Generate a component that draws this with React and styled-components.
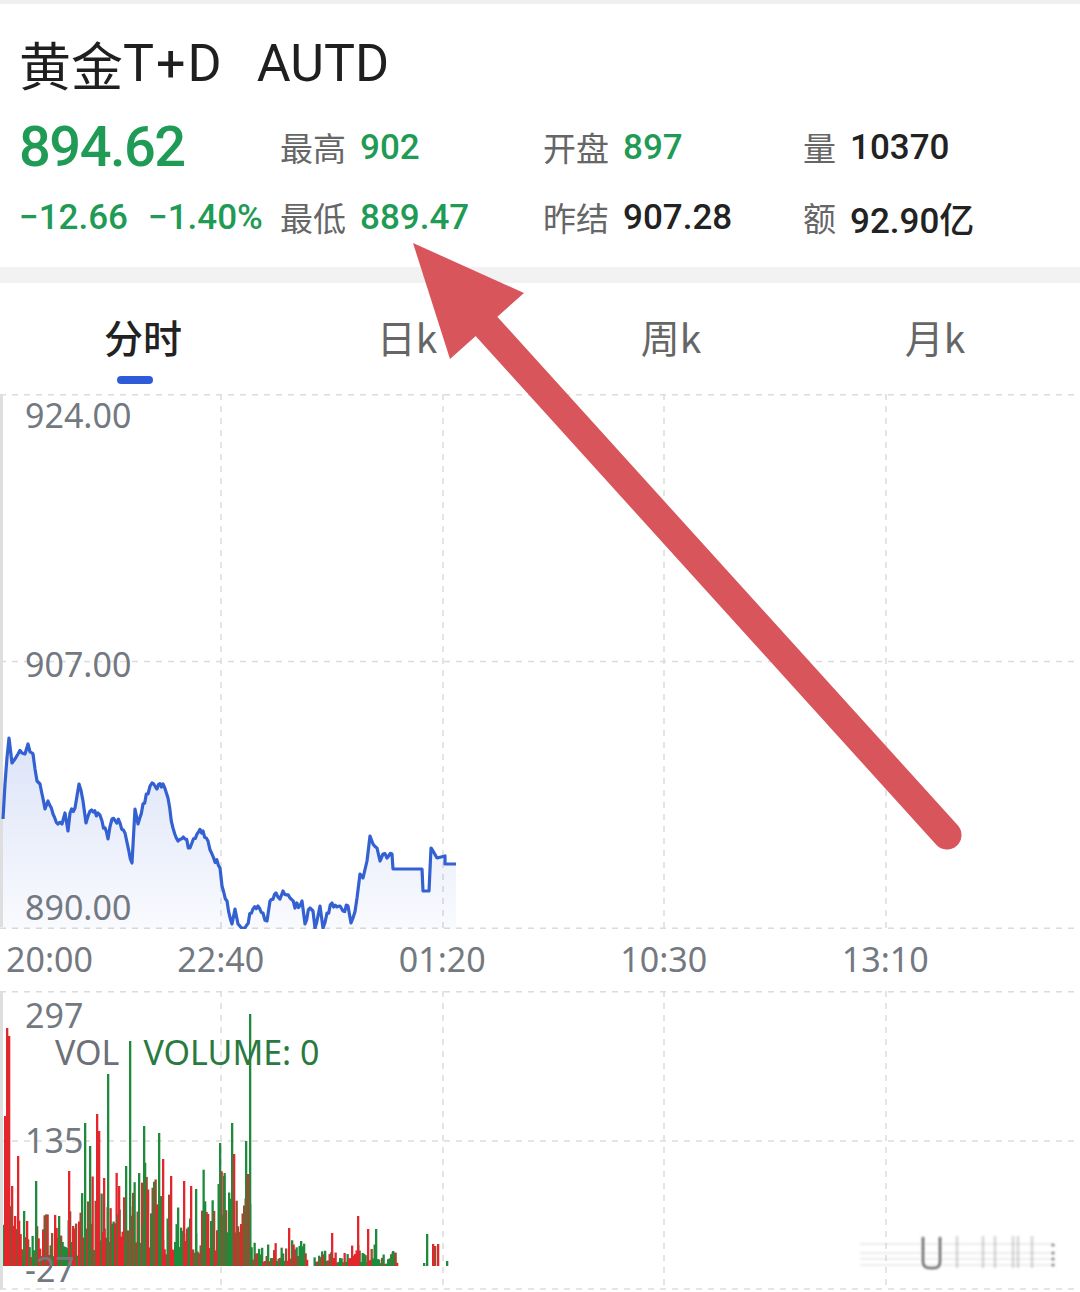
import React from 'react'
import styled, { createGlobalStyle } from 'styled-components'

const GREEN = '#1f9b55'
const AXIS = '#737981'
const GRID = '#dcdcdc'

const GlobalStyle = createGlobalStyle`
  html, body {
    margin: 0;
    padding: 0;
    background: #fff;
  }
  body {
    font-family: "Noto Sans", "Noto Sans CJK SC", sans-serif;
    -webkit-font-smoothing: antialiased;
  }
`

// seeded random so the picture is the same on every run
const makeRng = (seed) => () => {
  seed |= 0
  seed = (seed + 0x6d2b79f5) | 0
  let t = Math.imul(seed ^ (seed >>> 15), 1 | seed)
  t = (t + Math.imul(t ^ (t >>> 7), 61 | t)) ^ t
  return ((t ^ (t >>> 14)) >>> 0) / 4294967296
}

// price line, page coords (x, y)
const PRICE = [[3,818],[5,783],[9,737],[12,762],[15,758],[18,753],[22,752],[25,753],[28,743],[32,752],[33,753],[37,780],[40,783],[45,808],[48,800],[53,813],[58,823],[62,823],[65,812],[68,830],[70,812],[75,807],[79,783],[83,800],[86,822],[90,810],[98,812],[102,820],[108,838],[112,818],[120,822],[125,832],[132,862],[135,808],[138,823],[143,803],[148,793],[152,782],[157,788],[163,783],[168,797],[173,827],[178,840],[185,838],[190,847],[197,833],[203,830],[208,840],[212,853],[220,867],[222,885],[227,900],[232,923],[235,908],[238,923],[245,928],[253,908],[258,905],[263,912],[267,920],[270,900],[276,892],[280,898],[283,890],[290,897],[295,907],[302,900],[305,923],[310,907],[313,910],[315,928],[320,905],[323,928],[327,912],[332,902],[340,905],[343,910],[348,905],[351,922],[353,917],[357,897],[360,873],[363,877],[367,860],[370,835],[373,843],[377,847],[380,860],[383,853],[387,857],[392,853],[393,868],[422,868],[423,890],[429,890],[431,847],[433,850],[437,857],[445,855],[445,863],[456,863]]

const PRICE_TOP = 393

const buildLine = () => {
  const rnd = makeRng(7)
  const pts = []
  for (let i = 0; i < PRICE.length; i++) {
    const [x, y] = PRICE[i]
    pts.push([x, y - PRICE_TOP])
    const next = PRICE[i + 1]
    if (next && x < 390 && next[0] - x > 3) {
      const steps = Math.floor((next[0] - x) / 1.5)
      for (let s = 1; s < steps; s++) {
        const f = s / steps
        const jy = (rnd() - 0.5) * 7
        pts.push([x + (next[0] - x) * f, y + (next[1] - y) * f + jy - PRICE_TOP])
      }
    }
  }
  return pts
}

const LINE = buildLine()
const linePath = LINE.map(([x, y], i) => `${i ? 'L' : 'M'}${x.toFixed(1)} ${Math.min(y, 534).toFixed(1)}`).join(' ')
const areaPath = `${linePath} L456 535 L3 535 Z`

// volume bars
const RED = '#e2262c'
const GRN = '#1e8a3b'
const BRN = '#9d4a2d'
const BASE = 275

const env = (x) => {
  if (x < 10) return 70
  if (x < 80) return 55
  if (x < 160) return 105
  if (x < 200) return 75
  if (x < 250) return 100
  if (x < 310) return 26
  if (x < 350) return 16
  if (x < 375) return 24
  return 14
}

const SPIKES = [[4,150,'r'],[6,238,'r'],[8,230,'r'],[11,80,'r'],[14,50,'r'],[17,110,'r'],[23,55,'g'],[26,45,'r'],[35,85,'g'],[42,35,'r'],[58,50,'g'],[68,95,'r'],[72,40,'r'],[84,143,'g'],[89,120,'g'],[96,152,'r'],[98,135,'r'],[103,88,'r'],[107,192,'g'],[118,80,'r'],[125,100,'g'],[129,225,'g'],[143,140,'g'],[158,133,'g'],[162,107,'r'],[170,90,'r'],[183,85,'r'],[190,80,'r'],[195,77,'g'],[210,45,'g'],[219,123,'g'],[223,90,'g'],[231,143,'g'],[233,112,'r'],[245,125,'g'],[247,92,'r'],[249,252,'g'],[288,38,'r'],[300,25,'g'],[331,33,'r'],[357,50,'r'],[367,37,'r'],[375,37,'g'],[392,15,'g'],[423,3,'g'],[426,32,'g'],[432,22,'r'],[434,20,'b'],[437,22,'r'],[446,5,'g']]

const colorOf = (c) => (c === 'r' ? RED : c === 'g' ? GRN : BRN)

const buildBars = () => {
  const rnd = makeRng(42)
  const bars = []
  for (let x = 3; x < 397; x += 1.5) {
    if (x > 306 && x < 313) continue
    const h = env(x) * (0.15 + 0.85 * Math.pow(rnd(), 1.3))
    const r = rnd()
    bars.push({ x, h, c: r < 0.42 ? RED : r < 0.8 ? GRN : BRN })
  }
  SPIKES.forEach(([x, h, c]) => bars.push({ x, h, c: colorOf(c) }))
  return bars
}

const BARS = buildBars()

const VLINES = [221, 443, 664, 886]

const Grid = ({ height, rows }) => (
  <>
    {rows.map((y) => (
      <line key={'h' + y} x1="0" x2="1080" y1={y} y2={y} stroke={GRID} strokeWidth="1.5" strokeDasharray="6 6" />
    ))}
    {VLINES.map((x) => (
      <line key={'v' + x} x1={x} x2={x} y1="0" y2={height} stroke={GRID} strokeWidth="1.5" strokeDasharray="6 6" />
    ))}
    <line x1="1.5" x2="1.5" y1="0" y2={height - 2} stroke="#dedede" strokeWidth="3" />
  </>
)

const TABS = ['分时', '日k', '周k', '月k']

export default function App() {
  return (
    <Page>
      <GlobalStyle />
      <TopStrip />
      <Header>
        <Title>
          黄金<TitleCode>T+D</TitleCode>
          <TitleSymbol>AUTD</TitleSymbol>
        </Title>
        <Stats>
          <BigPrice>894.62</BigPrice>
          <Stat><Label>最高</Label><Value $green>902</Value></Stat>
          <Stat><Label>开盘</Label><Value $green>897</Value></Stat>
          <Stat><Label>量</Label><Value>10370</Value></Stat>
          <Change>
            <Value $green>−12.66</Value>
            <Value $green>−1.40%</Value>
          </Change>
          <Stat><Label>最低</Label><Value $green>889.47</Value></Stat>
          <Stat><Label>昨结</Label><Value>907.28</Value></Stat>
          <Stat><Label>额</Label><Value>92.90亿</Value></Stat>
        </Stats>
      </Header>
      <Band />
      <Tabs>
        {TABS.map((t, i) => (
          <Tab key={t}>
            <TabLabel $active={i === 0}>{t}</TabLabel>
            {i === 0 && <Indicator />}
          </Tab>
        ))}
      </Tabs>

      <PriceChart>
        <svg width="1080" height="535">
          <defs>
            <linearGradient id="area" gradientUnits="userSpaceOnUse" x1="0" y1="340" x2="0" y2="535">
              <stop offset="0" stopColor="#3a63d6" stopOpacity="0.18" />
              <stop offset="1" stopColor="#3a63d6" stopOpacity="0.03" />
            </linearGradient>
          </defs>
          <Grid height={535} rows={[0.75, 267.5, 534.25]} />
          <path d={areaPath} fill="url(#area)" />
          <path d={linePath} fill="none" stroke="#3461d1" strokeWidth="3.2" strokeLinejoin="round" />
        </svg>
        <AxisLabel $top={4}>924.00</AxisLabel>
        <AxisLabel $top={253}>907.00</AxisLabel>
        <AxisLabel $top={496}>890.00</AxisLabel>
      </PriceChart>

      <TimeAxis>
        <FirstTime>20:00</FirstTime>
        {['22:40', '01:20', '10:30', '13:10'].map((t) => (
          <TimeCell key={t}>{t}</TimeCell>
        ))}
      </TimeAxis>

      <VolumeChart>
        <svg width="1080" height="302">
          <Grid height={300} rows={[0.75, 150, 298]} />
          {BARS.map((b, i) => (
            <rect key={i} x={b.x} y={BASE - b.h} width="2.3" height={b.h} fill={b.c} />
          ))}
        </svg>
        <AxisLabel $top={7}>297</AxisLabel>
        <VolTag>
          <span>VOL</span>
          <VolValue>VOLUME: 0</VolValue>
        </VolTag>
        <AxisLabel $top={132}>135</AxisLabel>
        <AxisLabel $top={261}>-27</AxisLabel>
      </VolumeChart>

      <Overlay width="1080" height="1292" viewBox="0 0 1080 1292">
        <defs>
          <filter id="soft" x="-10%" y="-50%" width="120%" height="200%">
            <feGaussianBlur stdDeviation="1.3" />
          </filter>
        </defs>
        <g filter="url(#soft)">
          {[1244, 1253, 1259, 1265].map((y) => (
            <line key={y} x1="860" x2="1053" y1={y} y2={y} stroke="#bbb" strokeWidth="1.5" opacity="0.35" />
          ))}
          {[957, 983, 995, 1013, 1018, 1032].map((x) => (
            <line key={x} x1={x} x2={x} y1="1236" y2="1268" stroke="#888" strokeWidth="2.5" opacity="0.35" />
          ))}
          <path d="M923 1237 V1262 Q923 1268 930 1268 H934 Q940 1268 940 1262 V1237" fill="none" stroke="#333" strokeWidth="2.5" opacity="0.75" />
          {[1245, 1253, 1259, 1265].map((y) => (
            <circle key={y} cx="1053" cy={y} r="1.6" fill="#444" opacity="0.7" />
          ))}
        </g>
        <line x1="947" y1="835" x2="487" y2="327" stroke="#d8555b" strokeWidth="29" strokeLinecap="round" />
        <polygon points="413,243 524,293 450,359" fill="#d8555b" />
      </Overlay>
    </Page>
  )
}

const Page = styled.div`
  position: relative;
  width: 1080px;
  height: 1292px;
  overflow: hidden;
  background: #fff;
`

const TopStrip = styled.div`
  height: 4px;
  background: #efefef;
`

const Header = styled.div`
  padding: 29px 0 15px 19px;
`

const Title = styled.div`
  display: flex;
  align-items: center;
  height: 60px;
  font-family: "Roboto", "Noto Sans CJK SC", sans-serif;
  font-size: 52px;
  color: #1f1f1f;
`

const TitleCode = styled.span`
  letter-spacing: 2px;
`

const TitleSymbol = styled.span`
  margin-left: 33px;
`

const Stats = styled.div`
  margin-top: 19px;
  display: grid;
  grid-template-columns: 261px 263px 260px 1fr;
  grid-auto-rows: 70px;
  align-items: center;
`

const BigPrice = styled.div`
  font-family: "Roboto", sans-serif;
  font-weight: 500;
  font-size: 56px;
  letter-spacing: -1.5px;
  color: ${GREEN};
`

const Stat = styled.div`
  display: flex;
  align-items: center;
  gap: 14px;
`

const Change = styled.div`
  display: flex;
  align-items: center;
  gap: 20px;
`

const Label = styled.span`
  font-family: "Noto Sans CJK SC", sans-serif;
  font-size: 33px;
  color: #666;
`

const Value = styled.span`
  font-family: "Roboto", "Noto Sans CJK SC", sans-serif;
  font-weight: 500;
  font-size: 35px;
  color: ${(p) => (p.$green ? GREEN : '#222')};
`

const Band = styled.div`
  height: 16px;
  background: #f2f2f2;
`

const Tabs = styled.div`
  display: grid;
  grid-template-columns: repeat(4, 264px);
  padding: 28px 13px 10px 11px;
`

const Tab = styled.div`
  display: flex;
  flex-direction: column;
  align-items: center;
  height: 73px;
`

const TabLabel = styled.div`
  font-family: "Noto Sans CJK SC", sans-serif;
  font-size: 39px;
  line-height: 50px;
  font-weight: ${(p) => (p.$active ? 500 : 400)};
  color: ${(p) => (p.$active ? '#222' : '#666')};
`

const Indicator = styled.div`
  margin-top: 15px;
  width: 36px;
  height: 8px;
  border-radius: 4px;
  background: #2f5bd8;
  transform: translateX(-8px);
`

const PriceChart = styled.div`
  position: relative;
  height: 535px;
  svg {
    display: block;
  }
`

const AxisLabel = styled.div`
  position: absolute;
  left: 25px;
  top: ${(p) => p.$top}px;
  font-family: "Noto Sans", sans-serif;
  font-size: 34px;
  line-height: 34px;
  color: ${AXIS};
`

const TimeAxis = styled.div`
  display: flex;
  height: 62px;
  box-sizing: border-box;
  padding: 13px 0 0 6px;
  font-family: "Noto Sans", sans-serif;
  font-size: 34px;
  line-height: 34px;
  color: ${AXIS};
`

const FirstTime = styled.div`
  width: 104px;
`

const TimeCell = styled.div`
  width: 221.5px;
  text-align: center;
`

const VolumeChart = styled.div`
  position: relative;
  height: 302px;
  svg {
    display: block;
  }
`

const VolTag = styled.div`
  position: absolute;
  left: 55px;
  top: 44px;
  display: flex;
  gap: 24px;
  font-family: "Noto Sans", sans-serif;
  font-size: 34px;
  line-height: 34px;
  color: #6c7078;
`

const VolValue = styled.span`
  color: #2a7a3f;
`

const Overlay = styled.svg`
  position: absolute;
  top: 0;
  left: 0;
  pointer-events: none;
`
